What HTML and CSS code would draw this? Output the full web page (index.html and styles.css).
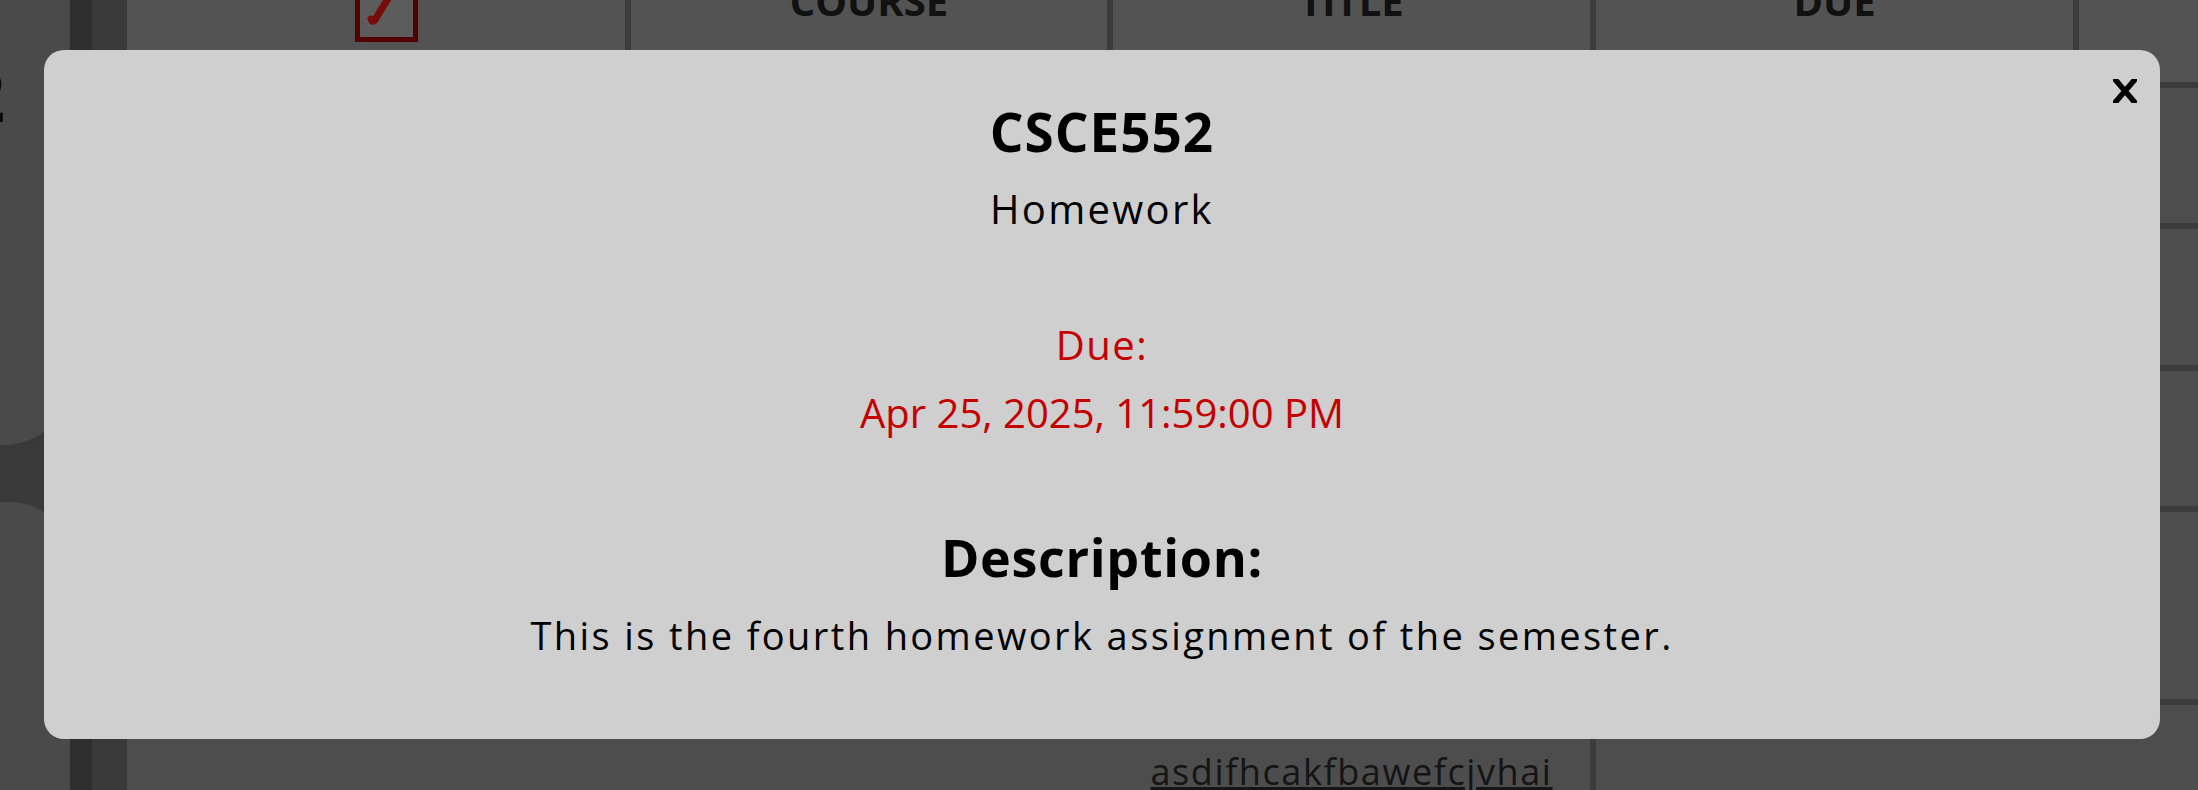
FILE: index.html
```html
<!DOCTYPE html>
<html lang="en">
<head>
<meta charset="utf-8">
<title>Assignment details</title>
<link rel="stylesheet" href="styles.css">
</head>
<body>
<div class="page">
  <aside class="sidebar">
    <div class="side-card side-card-top">
      <div class="side-num">2</div>
    </div>
    <div class="side-card side-card-bottom"></div>
  </aside>
  <div class="rail"></div>
  <div class="gutter"></div>
  <main class="table">
    <div class="tr thead">
      <div class="td td-check">
        <span class="checkbox">
          <svg viewBox="0 0 53 53" width="53" height="53"><path d="M11 35 Q 12 39, 15 36 C 23 22, 32 8, 46 -12" fill="none" stroke="#f51616" stroke-width="7" stroke-linecap="round" stroke-linejoin="round"/></svg>
        </span>
      </div>
      <div class="td th">COURSE</div>
      <div class="td th">TITLE</div>
      <div class="td th">DUE</div>
      <div class="td th"></div>
    </div>
    <div class="tr row-a"><div class="td"></div><div class="td"></div><div class="td"></div><div class="td"></div><div class="td"></div></div>
    <div class="tr row-b"><div class="td"></div><div class="td"></div><div class="td"></div><div class="td"></div><div class="td"></div></div>
    <div class="tr row-a"><div class="td"></div><div class="td"></div><div class="td"></div><div class="td"></div><div class="td"></div></div>
    <div class="tr row-tall"><div class="td"></div><div class="td"></div><div class="td"></div><div class="td"></div><div class="td"></div></div>
    <div class="tr row-last">
      <div class="td plain"></div>
      <div class="td plain"></div>
      <div class="td title-cell"><a class="title-link" href="#">asdifhcakfbawefcjvhai</a></div>
      <div class="td plain"></div>
      <div class="td plain"></div>
    </div>
  </main>
</div>

<div class="overlay">
  <section class="modal">
    <button class="close" aria-label="Close">
      <svg viewBox="0 0 24 24" width="24" height="24"><path d="M0 -2 L24 26 M24 -2 L0 26" stroke="#000" stroke-width="5.5" fill="none"/></svg>
    </button>
    <h2 class="course">CSCE552</h2>
    <p class="type">Homework</p>
    <p class="due-label">Due:</p>
    <p class="due-date">Apr 25, 2025, 11:59:00 PM</p>
    <h2 class="desc-title">Description:</h2>
    <p class="desc">This is the fourth homework assignment of the semester.</p>
  </section>
</div>
</body>
</html>
```

FILE: styles.css
```css
* { box-sizing: border-box; }

html, body {
  margin: 0;
  height: 790px;
  overflow: hidden;
}

body {
  background: #747474;
  font-family: "Open Sans", "Noto Sans", sans-serif;
  color: #000;
}

.page {
  display: flex;
  margin-top: -60px;
  height: 850px;
}

/* left sidebar */
.sidebar {
  width: 70px;
  display: flex;
  flex-direction: column;
  background: linear-gradient(#545454, #747474 60%);
}
.side-card {
  background: #949494;
  width: 70px;
}
.side-card-top {
  height: 505px;
  border-bottom-right-radius: 66px;
  overflow: hidden;
}
.side-card-bottom {
  margin-top: 57px;
  flex: 1;
  border-top-right-radius: 60px;
}
.side-num {
  margin: 118px 0 0 -36px;
  font-weight: 700;
  font-size: 72px;
  line-height: 1;
  color: #151515;
}

.rail {
  width: 22px;
  background: #5c5c5c;
}
.gutter {
  width: 35px;
}

/* table */
.table {
  flex: 1;
  display: flex;
  flex-direction: column;
  background: #9a9a9a;
}
.tr {
  display: grid;
  grid-template-columns: 504px 482px 483px 483px 1fr;
}
.td {
  border-right: 6px solid #787878;
  border-bottom: 6px solid #787878;
}
.td:last-child { border-right: 0; }

.thead { height: 148px; background: #a6a6a6; }
.th {
  text-align: center;
  font-weight: 700;
  font-size: 40px;
  line-height: 1;
  padding-top: 41px;
  color: #222;
}
.td-check { padding: 39px 0 0 228px; }
.checkbox {
  display: block;
  width: 63px;
  height: 63px;
  border: 5px solid #a40000;
  background: #b8b8b8;
}
.checkbox svg { display: block; overflow: hidden; }

.row-a { height: 141px; }
.row-b { height: 142px; }
.row-tall { height: 193px; }
.row-last { flex: 1; }
.row-last .td { border-bottom: 0; }
.row-last .plain { border-right: 0; }
.title-cell {
  text-align: center;
  padding-top: 49px;
}
.title-link {
  font-size: 36px;
  line-height: 1;
  letter-spacing: 1.6px;
  color: #2a2a2a;
  text-decoration: underline;
}

/* modal */
.overlay {
  position: fixed;
  inset: 0;
  background: rgba(0, 0, 0, 0.5);
  display: flex;
  padding: 50px 38px 51px 44px;
}
.modal {
  position: relative;
  flex: 1;
  background: #cfcfcf;
  border-radius: 20px;
  text-align: center;
  padding-top: 55px;
}
.close {
  position: absolute;
  top: 29px;
  right: 23px;
  width: 24px;
  height: 24px;
  padding: 0;
  border: 0;
  background: none;
  cursor: pointer;
}
.close svg { display: block; }

.modal h2, .modal p { margin: 0; line-height: 1; }
.course {
  font-size: 53px;
  font-weight: 700;
  letter-spacing: 1px;
}
.type {
  margin-top: 31px !important;
  font-size: 40px;
  letter-spacing: 2.3px;
}
.due-label, .due-date {
  color: #c50000;
  font-size: 40px;
}
.due-label { margin-top: 96px !important; letter-spacing: 1.5px; }
.due-date { margin-top: 28px !important; }
.desc-title {
  margin-top: 98px !important;
  font-size: 52px;
  font-weight: 700;
  letter-spacing: 0.7px;
}
.desc {
  margin-top: 33px !important;
  font-size: 38px;
  letter-spacing: 2.4px;
}
```
